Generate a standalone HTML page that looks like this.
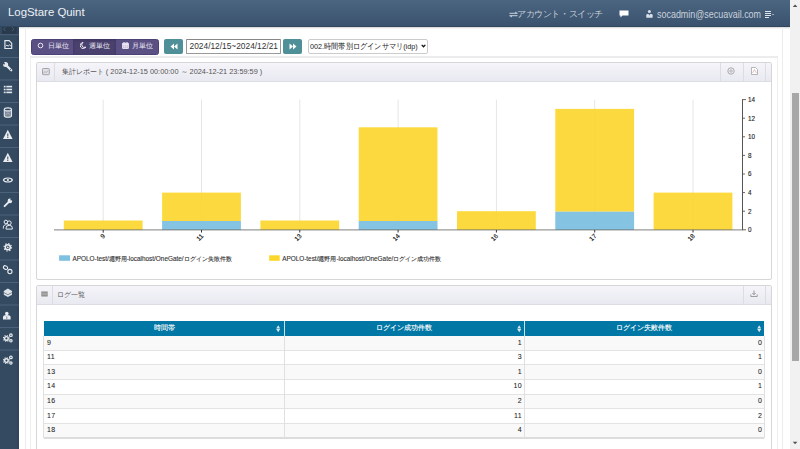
<!DOCTYPE html>
<html><head><meta charset="utf-8">
<style>
*{margin:0;padding:0;box-sizing:border-box}
html,body{width:800px;height:449px;overflow:hidden;background:#fff;font-family:"Liberation Sans",sans-serif}
.a{position:absolute}
#hdr{left:0;top:0;width:790px;height:26.6px;background:linear-gradient(#4b6581,#3a526d);border-bottom:1px solid #31475e;box-shadow:0 1px 1.5px rgba(0,0,0,.18)}
#title{left:8px;top:5px;font-size:11.4px;color:#eef2f6;line-height:14px;white-space:nowrap}
.ht{color:#c9d2dc;white-space:nowrap}
#sb{left:0;top:27px;width:18.9px;height:422px;background:#344a61}
#sbtog{left:2px;top:26.6px;width:15.5px;height:7.4px;background:#2a3a4d}
.sbl{position:absolute;left:0;width:19px;height:1px;background:#42597380}
#scroll{left:790px;top:0;width:10px;height:449px;background:#f1f1f1}
#thumb{left:791.5px;top:93.4px;width:7.5px;height:267.2px;background:#a8a8a8}
.vl{position:absolute;width:1px;background:#e6e6e6}
.btn{position:absolute;top:38.1px;height:15.9px;color:#eeeaf5;font-size:6.9px;line-height:15.9px;white-space:nowrap}
.teal{position:absolute;top:38.8px;height:15px;width:18.5px;background:#4e8f98;border-radius:2px}
.panel{position:absolute;left:36px;width:736px;border:1px solid #d6d6d6;border-radius:2px;background:#fff}
.ph{position:absolute;left:0;top:0;right:0;height:19px;background:linear-gradient(#f4f4f9,#e9e9f1);border-bottom:1px solid #dcdce4}
.sep{position:absolute;top:0;width:1px;height:19px;background:#dcdce2}
.pt{position:absolute;top:5px;font-size:7.3px;color:#555;white-space:nowrap;line-height:9px}
.tick{position:absolute;font-size:6.3px;color:#222;white-space:nowrap;line-height:7px;-webkit-text-stroke:0.12px #333}
.thx{position:absolute;top:324.3px;width:120px;text-align:center;color:#fff;font-weight:normal;font-size:6.85px;line-height:8px;white-space:nowrap;-webkit-text-stroke:0.12px #fff}
.td{position:absolute;font-size:7px;line-height:7px;color:#222;white-space:nowrap;-webkit-text-stroke:0.06px #222;letter-spacing:0.4px}
.td.r{width:300px;text-align:right}
</style></head><body>
<div id="hdr" class="a"></div>
<div id="title" class="a">LogStare Quint</div>
<svg class="a" style="left:509px;top:11px" width="9" height="7" viewBox="0 0 9 7"><path d="M0.5 2.3h8M0.5 4.7h8" stroke="#c9d2dc" stroke-width="1"/><path d="M6.2 0.6L8.6 2.3H6.2z M2.8 6.4L0.4 4.7H2.8z" fill="#c9d2dc"/></svg>
<div class="a ht" style="left:517.3px;top:9.2px;font-size:9px;line-height:11px;letter-spacing:-0.45px">アカウント・スイッチ</div>
<svg class="a" style="left:619px;top:10px" width="10" height="8" viewBox="0 0 10 8"><path d="M0.5 0.5h9v5h-6l-2 2v-2h-1z" fill="#fff"/></svg>
<svg class="a" style="left:646.3px;top:10.3px" width="7" height="8" viewBox="0 0 7 8"><circle cx="3.4" cy="1.6" r="1.5" fill="#d8e0ea"/><path d="M0.3 7.7V5.2Q0.3 3.9 1.6 3.9H5.2Q6.6 3.9 6.6 5.2V7.7z" fill="#d8e0ea"/><path d="M2.6 3.9L3.4 5.6L4.2 3.9" fill="#4a6380"/></svg>
<div class="a ht" style="left:657px;top:8.8px;font-size:10.2px;line-height:11px;transform:scaleX(0.878);transform-origin:0 0">socadmin@secuavail.com</div>
<svg class="a" style="left:765px;top:11px" width="9" height="7" viewBox="0 0 9 7"><path d="M0 0.5h6M0 2.5h6M0 4.5h6M0 6.5h4" stroke="#dfe5ec" stroke-width="1"/><path d="M7 3h2l-1 1.2z" fill="#dfe5ec"/></svg>

<div id="sb" class="a"></div>
<div id="sbtog" class="a"></div>
<svg class="a" style="left:0;top:0" width="19" height="449" viewBox="0 0 19 449">
<path d="M5.6 27.1L3.6 29.1L5.6 31.1M11.9 27.1L13.9 29.1L11.9 31.1" fill="none" stroke="#475e77" stroke-width="0.9"/>
<rect x="16.8" y="27" width="2.1" height="422" fill="#2f4560"/>
<g fill="#4a627c"><rect x="0" y="34.2" width="18.9" height="1"/><rect x="0" y="57" width="18.9" height="1"/><rect x="0" y="79.5" width="18.9" height="1"/><rect x="0" y="102" width="18.9" height="1"/><rect x="0" y="124.5" width="18.9" height="1"/><rect x="0" y="147" width="18.9" height="1"/><rect x="0" y="169.5" width="18.9" height="1"/><rect x="0" y="192" width="18.9" height="1"/><rect x="0" y="214.5" width="18.9" height="1"/><rect x="0" y="237" width="18.9" height="1"/><rect x="0" y="259.5" width="18.9" height="1"/><rect x="0" y="282" width="18.9" height="1"/><rect x="0" y="304.5" width="18.9" height="1"/><rect x="0" y="327" width="18.9" height="1"/><rect x="0" y="349.5" width="18.9" height="1"/></g>
<g fill="none" stroke="#e4e8ed" stroke-width="1">
 <path d="M4.9 40.6h4.2l2.6 2.6v5.3h-6.8z" stroke-width="1.15"/><path d="M5.6 46.2l1.4-1.2l1.2 1.3l1.2-1.6l1.6 1.5" stroke-width="0.9"/>
</g>
<g fill="#e4e8ed">
 <circle cx="5.6" cy="64.6" r="2.5"/><path d="M5.6 64.6L11.2 70.2" stroke="#e4e8ed" stroke-width="2.3" stroke-linecap="round"/><path d="M2.6 62.2L4.6 64.2" stroke="#344a61" stroke-width="1.4"/><circle cx="10.6" cy="69.6" r="0.55" fill="#344a61"/>
 <rect x="3.8" y="85.8" width="1.8" height="1.6"/><rect x="6.3" y="85.8" width="5.8" height="1.6"/>
 <rect x="3.8" y="88.7" width="1.8" height="1.6"/><rect x="6.3" y="88.7" width="5.8" height="1.6"/>
 <rect x="3.8" y="91.6" width="1.8" height="1.6"/><rect x="6.3" y="91.6" width="5.8" height="1.6"/>
</g>
<g stroke="#e4e8ed">
 <path d="M4.3 109.4v6.4a3.6 1.5 0 0 0 7.2 0v-6.4" fill="#7d8a99" stroke-width="1.1"/>
 <ellipse cx="7.9" cy="109.4" rx="3.6" ry="1.5" fill="#344a61" stroke-width="1.1"/>
 <path d="M5.4 114.8l2.5-1.9l2.5 1.9" stroke-width="0.7" stroke="#b8c0ca" fill="none"/>
</g>
<g fill="#e8ecf0">
 <path d="M7.8 129.8L12.6 139H3z"/><path d="M7.8 152.8L12.6 162H3z"/>
</g>
<g fill="#344a61"><rect x="7.3" y="133.5" width="1" height="3"/><rect x="7.3" y="137" width="1" height="1"/><rect x="7.3" y="156.5" width="1" height="3"/><rect x="7.3" y="160" width="1" height="1"/></g>
<g fill="none" stroke="#e8ecf0">
 <path d="M3.4 180a4.6 2.6 0 0 1 9 0a4.6 2.6 0 0 1 -9 0z" stroke-width="1.1"/>
 <circle cx="7.9" cy="180" r="1.1" fill="#e8ecf0" stroke="none"/>
</g>
<g fill="#e8ecf0">
 <circle cx="9.9" cy="200.9" r="2.3"/><path d="M9.6 201.2L4.6 206.2" stroke="#e8ecf0" stroke-width="1.9" stroke-linecap="round"/><path d="M10.6 200.2L12.8 198" stroke="#344a61" stroke-width="1.3"/>
</g>
<g fill="none" stroke="#e8ecf0" stroke-width="1">
 <circle cx="5.9" cy="222" r="1.8"/><path d="M3.4 228.6v-1.4a2.6 2.4 0 0 1 3.2-2.4"/>
 <circle cx="9.2" cy="222.9" r="2" fill="#344a61"/><path d="M6.1 229.1v-1.2a3.1 2.6 0 0 1 6.2 0v1.2z" fill="#344a61"/>
</g>
<g fill="none" stroke="#e8ecf0">
 <circle cx="7.8" cy="247.3" r="3.7" stroke-width="1.2" stroke-dasharray="1.3 1.6"/>
 <circle cx="7.8" cy="247.3" r="2.5" stroke-width="1.5"/>
 <circle cx="7.8" cy="247.3" r="0.9" fill="#e8ecf0" stroke="none"/>
</g>
<g fill="none" stroke="#e8ecf0" stroke-width="1.1">
 <ellipse cx="5.5" cy="267.6" rx="2.2" ry="1.7" transform="rotate(30 5.5 267.6)"/>
 <ellipse cx="9.9" cy="271.6" rx="2.1" ry="2.2"/>
</g>
<g fill="#dde2e8">
 <path d="M7.9 288.6l4.1 2.3v3.8l-4.1 2.3l-4.1-2.3v-3.8z"/>
</g>
<path d="M3.8 292.6l4.1 2.1l4.1-2.1" fill="none" stroke="#344a61" stroke-width="0.6"/>
<g fill="#e8ecf0">
 <circle cx="6.8" cy="313.6" r="1.8"/><path d="M3 319.5v-2.6a3.8 2 0 0 1 7.6 0v2.6z"/>
</g>
<path d="M6.8 316.3v2.8" stroke="#344a61" stroke-width="0.6"/>
<g fill="none" stroke="#e8ecf0">
 <circle cx="6.4" cy="338.4" r="2.9" stroke-width="1.1" stroke-dasharray="1.1 1.18"/>
 <circle cx="6.4" cy="338.4" r="1.8" stroke-width="1.4"/>
 <circle cx="10.9" cy="335.2" r="1.3" stroke-width="1.2"/>
 <circle cx="10.9" cy="340.8" r="1.2" stroke-width="1.2"/>
 <circle cx="6.4" cy="360.6" r="2.9" stroke-width="1.1" stroke-dasharray="1.1 1.18"/>
 <circle cx="6.4" cy="360.6" r="1.8" stroke-width="1.4"/>
 <circle cx="10.9" cy="357.4" r="1.3" stroke-width="1.2"/>
 <circle cx="10.9" cy="363" r="1.2" stroke-width="1.2"/>
</g>
</svg>

<div id="scroll" class="a"></div>
<div id="thumb" class="a"></div>
<svg class="a" style="left:790px;top:0" width="10" height="449" viewBox="0 0 10 449"><path d="M2.8 7L5.1 4.5L7.4 7z" fill="#505050"/><path d="M2.8 441.8L5.1 444.3L7.4 441.8z" fill="#505050"/></svg>

<!-- container lines -->
<div class="vl" style="left:25px;top:27px;height:422px;background:#ececec"></div>
<div class="vl" style="left:782px;top:27px;height:422px;background:#ececec"></div>
<div class="vl" style="left:30px;top:56px;height:393px;background:#efefef"></div>
<div class="vl" style="left:777px;top:56px;height:393px;background:#efefef"></div>
<div class="a" style="left:30px;top:56px;width:748px;height:1.5px;background:#ececec"></div>

<!-- toolbar -->
<div class="a" style="left:30.5px;top:38.75px;width:128px;height:15.9px;background:#5a5084;border-radius:2.5px;border:1px solid #4d4276"></div>
<div class="a" style="left:73.1px;top:38.75px;width:42.5px;height:15.9px;background:#4a416f;box-shadow:inset 0 1px 3px rgba(0,0,0,.2)"></div>
<div class="btn" style="left:36.6px"><svg style="vertical-align:-1px" width="7" height="7" viewBox="0 0 7 7"><circle cx="3.5" cy="3.5" r="2.3" fill="none" stroke="#f4f0fa" stroke-width="0.95"/></svg> <span style="margin-left:2px">日単位</span></div>
<div class="btn" style="left:79.5px"><svg style="vertical-align:-1px" width="6" height="7" viewBox="0 0 6 7"><path d="M3 0.5a3 3 0 1 0 2.8 4.5a2.6 2.6 0 0 1 -2.8-4.5z" fill="none" stroke="#fff" stroke-width="0.9"/></svg> <span style="margin-left:2px">週単位</span></div>
<div class="btn" style="left:121.5px"><svg style="vertical-align:-1px" width="7" height="7" viewBox="0 0 7 7"><rect x="0.6" y="1.1" width="5.8" height="5.5" fill="#c9b9d9" stroke="#f3eef8" stroke-width="0.9" rx="0.4"/><path d="M0.8 2.6h5.4" stroke="#f3eef8" stroke-width="1"/><path d="M1 4.3h5M2.6 2.6v4M4.4 2.6v4" stroke="#f3eef8" stroke-width="0.5"/><path d="M2 0.2v1.5M5 0.2v1.5" stroke="#fff" stroke-width="0.8"/></svg> <span style="margin-left:2px">月単位</span></div>

<div class="teal" style="left:164.4px"><svg style="position:absolute;left:5.5px;top:4px" width="8" height="7" viewBox="0 0 8 7"><path d="M4 0.5L0.5 3.5L4 6.5zM7.5 0.5L4 3.5L7.5 6.5z" fill="#fff"/></svg></div>
<div class="a" style="left:185.6px;top:38.5px;width:95.2px;height:15px;border:1px solid #999;border-top-color:#888;border-left-color:#999;background:#fff;border-radius:1px"></div>
<div class="a" style="left:189.6px;top:42px;font-size:8.35px;color:#333;line-height:9px;white-space:nowrap">2024/12/15~2024/12/21</div>
<div class="teal" style="left:283px"><svg style="position:absolute;left:5.5px;top:4px" width="8" height="7" viewBox="0 0 8 7"><path d="M0.5 0.5L4 3.5L0.5 6.5zM4 0.5L7.5 3.5L4 6.5z" fill="#fff"/></svg></div>
<div class="a" style="left:307.6px;top:39px;width:120.8px;height:15px;border:1px solid #ccc;background:#fff;border-radius:2px"></div>
<div class="a" style="left:310.4px;top:41.5px;font-size:8px;color:#222;line-height:9px;white-space:nowrap;transform:scaleX(0.9);transform-origin:0 0">002.時間帯別ログインサマリ(idp)</div>
<svg class="a" style="left:420.5px;top:44px" width="5" height="4" viewBox="0 0 5 4"><path d="M0.7 0.9L2.5 2.8L4.3 0.9" fill="none" stroke="#111" stroke-width="1.3"/></svg>

<!-- panel 1 -->
<div class="panel" style="top:61.5px;height:218.2px">
  <div class="ph"></div>
  <div class="sep" style="left:17px"></div>
  <div class="sep" style="left:683px"></div>
  <div class="sep" style="left:705.5px"></div>
  <div class="sep" style="left:728px"></div>
</div>
<svg class="a" style="left:41.6px;top:67.6px" width="8" height="8" viewBox="0 0 8 8"><rect x="0.5" y="0.5" width="6.8" height="6.2" rx="0.8" fill="#e2e0ea" stroke="#9a9aa2" stroke-width="0.9"/><path d="M1.2 5.6L3 3.4L4.2 4.6L6 2.6" fill="none" stroke="#a49a8a" stroke-width="0.7"/></svg>
<div class="pt" style="left:61.8px;top:67px;font-size:7.35px">集計レポート ( 2024-12-15 00:00:00 ～ 2024-12-21 23:59:59 )</div>
<svg class="a" style="left:727px;top:67px" width="8" height="8" viewBox="0 0 8 8"><circle cx="4" cy="4" r="3.2" fill="none" stroke="#999" stroke-width="0.8"/><circle cx="4" cy="4" r="1.2" fill="none" stroke="#999" stroke-width="0.7"/></svg>
<svg class="a" style="left:751px;top:67px" width="7" height="8" viewBox="0 0 7 8"><path d="M0.5 0.5h4l2 2v5h-6z" fill="#fff" stroke="#999" stroke-width="0.7"/><path d="M1.5 6L3.5 2.5L5.5 6" fill="none" stroke="#c99" stroke-width="0.6"/></svg>

<!-- chart -->
<svg class="a" style="left:0;top:0" width="800" height="449">
  <g stroke="#e6e6e6" stroke-width="1">
    <line x1="103.2" y1="99.6" x2="103.2" y2="229.8"/>
    <line x1="201.5" y1="99.6" x2="201.5" y2="229.8"/>
    <line x1="299.8" y1="99.6" x2="299.8" y2="229.8"/>
    <line x1="398.1" y1="99.6" x2="398.1" y2="229.8"/>
    <line x1="496.4" y1="99.6" x2="496.4" y2="229.8"/>
    <line x1="594.7" y1="99.6" x2="594.7" y2="229.8"/>
    <line x1="693" y1="99.6" x2="693" y2="229.8"/>
  </g>
  <g fill="#fcd62a" fill-opacity="0.9">
    <rect x="63.8" y="220.5" width="78.8" height="9.3"/>
    <rect x="162.1" y="192.6" width="78.8" height="28.4"/>
    <rect x="260.4" y="220.5" width="78.8" height="9.3"/>
    <rect x="358.7" y="127.3" width="78.8" height="93.7"/>
    <rect x="457" y="211.2" width="78.8" height="18.6"/>
    <rect x="555.3" y="108.9" width="78.8" height="102.8"/>
    <rect x="653.6" y="192.6" width="78.8" height="37.2"/>
  </g>
  <g fill="#7dc0e0" fill-opacity="0.95">
    <rect x="162.1" y="221" width="78.8" height="8.8"/>
    <rect x="358.7" y="221" width="78.8" height="8.8"/>
    <rect x="555.3" y="211.7" width="78.8" height="18.1"/>
  </g>
  <line x1="54" y1="229.9" x2="742.5" y2="229.9" stroke="#464646" stroke-opacity="0.55" stroke-width="1.3"/>
  <line x1="742.5" y1="99.2" x2="742.5" y2="230.2" stroke="#555" stroke-width="1"/>
  <g stroke="#555" stroke-width="0.9">
    <line x1="742.5" y1="99.6" x2="746" y2="99.6"/>
    <line x1="742.5" y1="118.2" x2="745" y2="118.2"/>
    <line x1="742.5" y1="136.8" x2="745" y2="136.8"/>
    <line x1="742.5" y1="155.4" x2="745" y2="155.4"/>
    <line x1="742.5" y1="174" x2="745" y2="174"/>
    <line x1="742.5" y1="192.6" x2="745" y2="192.6"/>
    <line x1="742.5" y1="211.2" x2="745" y2="211.2"/>
    <line x1="742.5" y1="229.8" x2="746" y2="229.8"/>
  </g>
  <g stroke="#333" stroke-width="1">
    <line x1="103.2" y1="230" x2="103.2" y2="232.7"/>
    <line x1="201.5" y1="230" x2="201.5" y2="232.5"/>
    <line x1="299.8" y1="230" x2="299.8" y2="232.5"/>
    <line x1="398.1" y1="230" x2="398.1" y2="232.5"/>
    <line x1="496.4" y1="230" x2="496.4" y2="232.5"/>
    <line x1="594.7" y1="230" x2="594.7" y2="232.5"/>
    <line x1="693" y1="230" x2="693" y2="232.5"/>
  </g>
  <g font-family="Liberation Sans" font-size="6.3" fill="#222" stroke="#222" stroke-width="0.12">
    <text x="748" y="102">14</text>
    <text x="748" y="120.6">12</text>
    <text x="748" y="139.2">10</text>
    <text x="748" y="157.8">8</text>
    <text x="748" y="176.4">6</text>
    <text x="748" y="195">4</text>
    <text x="748" y="213.6">2</text>
    <text x="748" y="232.2">0</text>
  </g>
  <g font-family="Liberation Sans" font-size="6.4" fill="#222" stroke="#222" stroke-width="0.15" text-anchor="end">
    <text transform="translate(105.4,236.5) rotate(-45)">9</text>
    <text transform="translate(203.7,236.5) rotate(-45)">11</text>
    <text transform="translate(302.0,236.5) rotate(-45)">13</text>
    <text transform="translate(400.3,236.5) rotate(-45)">14</text>
    <text transform="translate(498.6,236.5) rotate(-45)">16</text>
    <text transform="translate(596.9,236.5) rotate(-45)">17</text>
    <text transform="translate(695.2,236.5) rotate(-45)">18</text>
  </g>
  <rect x="59.1" y="255.3" width="10.9" height="5.5" fill="#7dc0e0"/>
  <rect x="269.2" y="255.3" width="10.5" height="5.5" fill="#fcd62a"/>
</svg>
<div class="tick" style="left:72.5px;top:254.5px;font-size:6.4px;color:#333">APOLO-test/堀野用-localhost/OneGate/ログイン失敗件数</div>
<div class="tick" style="left:282.2px;top:254.5px;font-size:6.4px;color:#333">APOLO-test/堀野用-localhost/OneGate/ログイン成功件数</div>

<!-- panel 2 -->
<div class="panel" style="top:284.5px;height:180px">
  <div class="ph"></div>
  <div class="sep" style="left:15.4px"></div>
  <div class="sep" style="left:705.5px"></div>
  <div class="sep" style="left:728px"></div>
</div>
<svg class="a" style="left:41px;top:291px" width="7" height="6" viewBox="0 0 7 6"><rect x="0.3" y="0.5" width="6.4" height="5" fill="#888"/><path d="M0.5 2.2h6M0.5 3.8h6" stroke="#ddd" stroke-width="0.5"/></svg>
<div class="pt" style="left:57px;top:290px">ログ一覧</div>
<svg class="a" style="left:750px;top:290px" width="8" height="7" viewBox="0 0 8 7"><path d="M4 0.5v4M2.3 3L4 4.8L5.7 3M0.8 4.5v2h6.4v-2" fill="none" stroke="#888" stroke-width="0.8"/></svg>

<div class="a" style="left:44px;top:321.4px;width:720.3px;height:14.5px;background:#0077a4"></div>
<div class="a" style="left:283.6px;top:321.4px;width:0.8px;height:14.5px;background:#cfe2ec"></div>
<div class="a" style="left:524px;top:321.4px;width:0.8px;height:14.5px;background:#cfe2ec"></div>
<div class="thx" style="left:104px">時間帯</div>
<div class="thx" style="left:344.2px">ログイン成功件数</div>
<div class="thx" style="left:584.4px">ログイン失敗件数</div>
<svg class="a" style="left:276.4px;top:325.2px" width="4.4" height="7.6" viewBox="0 0 4.4 7.6"><path d="M0.2 3.5L2.2 0.3L4.2 3.5zM0.2 4.1L2.2 7.3L4.2 4.1z" fill="#d5e6ef"/></svg>
<svg class="a" style="left:516.8px;top:325.2px" width="4.4" height="7.6" viewBox="0 0 4.4 7.6"><path d="M0.2 3.5L2.2 0.3L4.2 3.5zM0.2 4.1L2.2 7.3L4.2 4.1z" fill="#d5e6ef"/></svg>
<svg class="a" style="left:757.2px;top:325.2px" width="4.4" height="7.6" viewBox="0 0 4.4 7.6"><path d="M0.2 3.5L2.2 0.3L4.2 3.5zM0.2 4.1L2.2 7.3L4.2 4.1z" fill="#d5e6ef"/></svg>
<div class="a" style="left:44px;top:335.90px;width:720.3px;height:14.53px;background:#f9f9f9"></div>
<div class="td" style="left:47px;top:338.90px">9</div>
<div class="td r" style="left:222px;top:338.90px">1</div>
<div class="td r" style="left:462.2px;top:338.90px">0</div>
<div class="a" style="left:44px;top:350.43px;width:720.3px;height:14.53px;background:#fff"></div>
<div class="a" style="left:44px;top:349.93px;width:720.3px;height:1px;background:#e3e3e3"></div>
<div class="td" style="left:47px;top:353.43px">11</div>
<div class="td r" style="left:222px;top:353.43px">3</div>
<div class="td r" style="left:462.2px;top:353.43px">1</div>
<div class="a" style="left:44px;top:364.96px;width:720.3px;height:14.53px;background:#f9f9f9"></div>
<div class="a" style="left:44px;top:364.46px;width:720.3px;height:1px;background:#e3e3e3"></div>
<div class="td" style="left:47px;top:367.96px">13</div>
<div class="td r" style="left:222px;top:367.96px">1</div>
<div class="td r" style="left:462.2px;top:367.96px">0</div>
<div class="a" style="left:44px;top:379.49px;width:720.3px;height:14.53px;background:#fff"></div>
<div class="a" style="left:44px;top:378.99px;width:720.3px;height:1px;background:#e3e3e3"></div>
<div class="td" style="left:47px;top:382.49px">14</div>
<div class="td r" style="left:222px;top:382.49px">10</div>
<div class="td r" style="left:462.2px;top:382.49px">1</div>
<div class="a" style="left:44px;top:394.02px;width:720.3px;height:14.53px;background:#f9f9f9"></div>
<div class="a" style="left:44px;top:393.52px;width:720.3px;height:1px;background:#e3e3e3"></div>
<div class="td" style="left:47px;top:397.02px">16</div>
<div class="td r" style="left:222px;top:397.02px">2</div>
<div class="td r" style="left:462.2px;top:397.02px">0</div>
<div class="a" style="left:44px;top:408.55px;width:720.3px;height:14.53px;background:#fff"></div>
<div class="a" style="left:44px;top:408.05px;width:720.3px;height:1px;background:#e3e3e3"></div>
<div class="td" style="left:47px;top:411.55px">17</div>
<div class="td r" style="left:222px;top:411.55px">11</div>
<div class="td r" style="left:462.2px;top:411.55px">2</div>
<div class="a" style="left:44px;top:423.08px;width:720.3px;height:14.53px;background:#f9f9f9"></div>
<div class="a" style="left:44px;top:422.58px;width:720.3px;height:1px;background:#e3e3e3"></div>
<div class="td" style="left:47px;top:426.08px">18</div>
<div class="td r" style="left:222px;top:426.08px">4</div>
<div class="td r" style="left:462.2px;top:426.08px">0</div>
<div class="a" style="left:44px;top:437.31px;width:720.3px;height:1.3px;background:#dcdcdc"></div>
<div class="a" style="left:43px;top:335.9px;width:1px;height:101.71px;background:#e0e0e0"></div>
<div class="a" style="left:283.8px;top:335.9px;width:1px;height:101.71px;background:#e0e0e0"></div>
<div class="a" style="left:524.1px;top:335.9px;width:1px;height:101.71px;background:#e0e0e0"></div>
<div class="a" style="left:763.8px;top:335.9px;width:1px;height:101.71px;background:#e0e0e0"></div>
</body></html>
